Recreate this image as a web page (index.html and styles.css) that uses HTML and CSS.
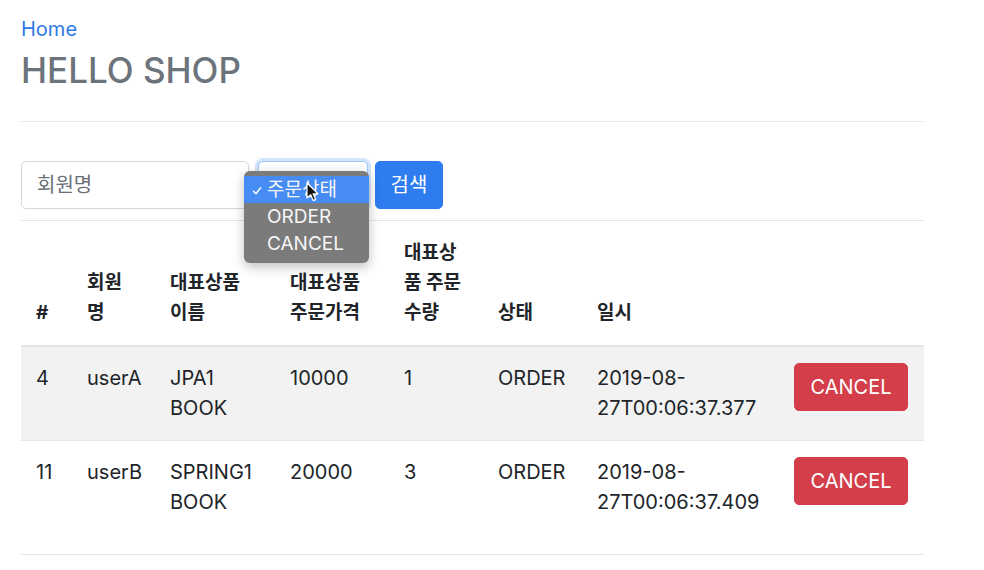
FILE: index.html
```html
<!DOCTYPE html>
<html lang="ko">
<head>
<meta charset="utf-8">
<title>HELLO SHOP</title>
<link rel="stylesheet" href="styles.css">
</head>
<body>
<div class="container">
  <div class="header">
    <nav class="nav"><a class="nav-link" href="#">Home</a></nav>
    <h3 class="brand">HELLO SHOP</h3>
  </div>

  <form class="search">
    <input class="field name-field" type="text" placeholder="회원명">
    <div class="field select-field"></div>
    <button class="btn btn-primary" type="button">검색</button>

    <div class="popup">
      <div class="option active">
        <svg class="check" width="10" height="10" viewBox="0 0 10 10"><path d="M1.5 5.2 L4 7.8 L8.6 1.8" fill="none" stroke="#fff" stroke-width="1.4" stroke-linecap="round" stroke-linejoin="round"/></svg>
        <span>주문상태</span>
        <svg class="cursor" width="14" height="21" viewBox="0 0 14 21"><path d="M1 1 L1 16 L4.6 12.6 L7.2 18.6 L9.6 17.6 L7.1 11.8 L12 11.8 Z" fill="#111" stroke="#fff" stroke-width="1.2" stroke-linejoin="round"/></svg>
      </div>
      <div class="option">ORDER</div>
      <div class="option">CANCEL</div>
    </div>
  </form>

  <table class="orders">
    <colgroup>
      <col class="c-id"><col class="c-member"><col class="c-item"><col class="c-price">
      <col class="c-count"><col class="c-status"><col class="c-date"><col class="c-action">
    </colgroup>
    <thead>
      <tr>
        <th>#</th>
        <th>회원<br>명</th>
        <th>대표상품<br>이름</th>
        <th>대표상품<br>주문가격</th>
        <th>대표상<br>품 주문<br>수량</th>
        <th>상태</th>
        <th>일시</th>
        <th></th>
      </tr>
    </thead>
    <tbody>
      <tr class="stripe">
        <td>4</td>
        <td>userA</td>
        <td>JPA1 BOOK</td>
        <td>10000</td>
        <td>1</td>
        <td>ORDER</td>
        <td>2019-08-<wbr>27T00:06:37.377</td>
        <td><button class="btn btn-danger" type="button">CANCEL</button></td>
      </tr>
      <tr class="last">
        <td>11</td>
        <td>userB</td>
        <td>SPRING1 BOOK</td>
        <td>20000</td>
        <td>3</td>
        <td>ORDER</td>
        <td>2019-08-<wbr>27T00:06:37.409</td>
        <td><button class="btn btn-danger" type="button">CANCEL</button></td>
      </tr>
    </tbody>
  </table>
</div>
</body>
</html>
```

FILE: styles.css
```css
* { box-sizing: border-box; }

html, body {
  margin: 0;
  padding: 0;
  background: #ffffff;
}

body {
  font-family: Inter, "Noto Sans CJK KR", "Liberation Sans", sans-serif;
  font-size: 20px;
  line-height: 30px;
  color: #212529;
}

.container {
  width: 903px;
  margin-left: 21px;
}

.header {
  padding-top: 14px;
  padding-bottom: 30px;
  border-bottom: 1px solid #e6e7e9;
}

.nav { display: flex; }

.nav-link {
  color: #2f7ae5;
  text-decoration: none;
  font-size: 20px;
  line-height: 30px;
}

.brand {
  margin: 5px 0 0;
  font-size: 35px;
  line-height: 42px;
  font-weight: 500;
  color: #6c737b;
}

.search {
  position: relative;
  display: flex;
  align-items: center;
  margin: 39px 0 11px;
  height: 48px;
}

.field {
  height: 48px;
  border: 1px solid #d3d7dc;
  border-radius: 5px;
  background: #fff;
  font-family: inherit;
}

.name-field {
  width: 228px;
  padding: 0 15px;
  font-size: 20px;
  color: #495057;
  outline: none;
}

.name-field::placeholder { color: #6a7077; }

.select-field {
  width: 110px;
  margin-left: 9px;
  border-color: #9cc6f7;
  box-shadow: 0 0 0 3px rgba(80, 150, 245, 0.25);
}

.btn {
  height: 48px;
  border: 1px solid transparent;
  border-radius: 5px;
  font-family: inherit;
  font-size: 20px;
  line-height: 30px;
  color: #fff;
  cursor: pointer;
}

.btn-primary {
  width: 68px;
  margin-left: 7px;
  padding: 0;
  background: #2e7cf0;
  border-color: #2e7cf0;
  font-size: 20px;
}

.btn-danger {
  width: 114px;
  padding: 0;
  background: #d43e4b;
  border-color: #d43e4b;
}

.popup {
  position: absolute;
  left: 223px;
  top: 10px;
  width: 125px;
  height: 92px;
  padding-top: 5px;
  background: #7b7b7b;
  border-radius: 6px;
  box-shadow: 0 4px 12px rgba(0, 0, 0, 0.25);
  color: #f6f6f6;
  font-size: 19px;
  line-height: 27px;
  z-index: 5;
}

.option {
  position: relative;
  height: 27px;
  padding-left: 23px;
}

.option.active {
  background: #468cf3;
  font-size: 19px;
}

.check {
  position: absolute;
  left: 8px;
  top: 10px;
}

.cursor {
  position: absolute;
  left: 62px;
  top: 6px;
}

.orders {
  width: 903px;
  border-collapse: collapse;
  table-layout: fixed;
  border-top: 1px solid #e3e5e8;
  border-bottom: 1px solid #e3e5e8;
}

.c-id { width: 51px; }
.c-member { width: 83px; }
.c-item { width: 120px; }
.c-price { width: 114px; }
.c-count { width: 94px; }
.c-status { width: 99px; }
.c-date { width: 197px; }
.c-action { width: 145px; }

.orders th,
.orders td {
  text-align: left;
}

.orders th {
  padding: 17px 15px;
  vertical-align: bottom;
  font-size: 19px;
  font-weight: 700;
  border-bottom: 2px solid #e1e3e6;
}

.orders td {
  padding: 16px 15px 17px;
  vertical-align: top;
  border-top: 1px solid #e3e5e8;
}

.orders tr.stripe td { background: #f2f2f2; }

.orders tr.last td { padding-bottom: 37px; }
```
